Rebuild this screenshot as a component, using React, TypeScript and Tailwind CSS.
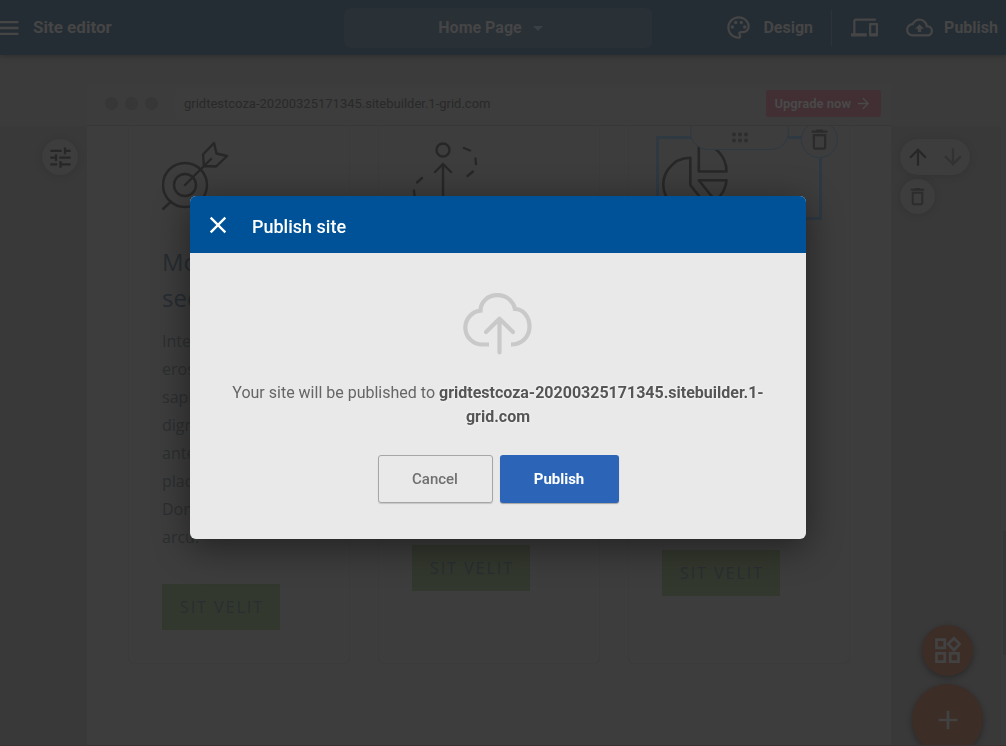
import type { ReactNode } from "react";
import {
  MdAdd,
  MdArrowDownward,
  MdArrowDropDown,
  MdArrowForward,
  MdArrowUpward,
  MdClose,
  MdDeleteOutline,
  MdMenu,
  MdOutlineBackup,
  MdOutlineDevices,
  MdOutlinePalette,
  MdOutlineWidgets,
  MdTune,
} from "react-icons/md";

const SITE = "gridtestcoza-20200325171345.sitebuilder.1-grid.com";

function TargetIcon() {
  return (
    <svg width="68" height="68" viewBox="0 0 68 68" fill="none" stroke="#272727" strokeWidth="2.4" strokeLinecap="round" strokeLinejoin="round" aria-hidden="true">
      <circle cx="23" cy="43" r="22" />
      <circle cx="23" cy="43" r="11" />
      <path d="M23 43 49 17M9 59.500 1 67M42 24 41 12.500 52 1 54.500 11.500 65 14 54 24.500Z" />
    </svg>
  );
}

function StrategyIcon() {
  return (
    <svg width="68" height="68" viewBox="0 0 68 68" fill="none" stroke="#272727" strokeWidth="2.4" strokeLinecap="round" strokeLinejoin="round" aria-hidden="true">
      <circle cx="31" cy="8" r="6.500" />
      <path d="M31 67V22M23 30 31 22 39 30" />
      <path d="M52 6 58 8.500M63.500 16.500 64 22M61 29.500 55.500 34M10 36 5 40.500M2 48.500 2.500 54M6 61 11 65" />
    </svg>
  );
}

function PieIcon() {
  return (
    <svg width="68" height="68" viewBox="0 0 68 68" fill="none" stroke="#272727" strokeWidth="2.6" strokeLinejoin="round" aria-hidden="true">
      <path d="M28.300 15.700A27 27 0 1 0 45 64L28.300 43Z" />
      <path d="M36.800 1V29.500H64.500A28.500 28.500 0 0 0 36.800 1Z" />
      <path d="M36.800 38.300H64.500Q63.500 50 53.500 59Z" />
    </svg>
  );
}

function CloudUploadIcon() {
  return (
    <svg width="70" height="62" viewBox="0 0 70 62" fill="none" stroke="#c9c9c9" strokeWidth="4.200" aria-hidden="true">
      <path d="M26 51.500H19.500A17 17 0 0 1 17.500 17.600C17.500 9 24.500 2.200 34.500 2.200S50.500 9 52 16C59.500 16 66.500 23 66.500 33.500S58.500 51.500 48 51.500" />
      <path d="M36.500 59.500V26M23 39 36.500 25.800 50 39" strokeLinecap="round" strokeLinejoin="round" />
    </svg>
  );
}

function DragDots() {
  return (
    <svg width="16" height="11" viewBox="0 0 16 11" fill="#2e2e2e" aria-hidden="true">
      {[2, 8, 14].map((x) => (
        <g key={x}>
          <circle cx={x} cy="2.500" r="2" />
          <circle cx={x} cy="8.500" r="2" />
        </g>
      ))}
    </svg>
  );
}

function Header() {
  return (
    <header className="relative z-10 flex h-[55px] shrink-0 items-center justify-between bg-[#252d34] pr-2 text-[#454545] shadow-[0_1px_6px_rgba(0,0,0,0.25)]">
      <div className="flex w-[344px] items-center gap-[11px]">
        <button type="button" aria-label="Menu" className="-ml-[6px]">
          <MdMenu size={28} />
        </button>
        <h1 className="text-[17px] font-bold">Site editor</h1>
      </div>
      <button type="button" className="flex h-10 max-w-[308px] flex-1 items-center justify-center gap-1 rounded-md bg-[#293036] pr-2 text-base font-bold">
        Home Page
        <MdArrowDropDown size={24} color="#3b4044" />
      </button>
      <div className="flex w-[346px] items-center justify-end text-base font-bold">
        <button type="button" className="flex items-center gap-[11px] pr-[18px]">
          <MdOutlinePalette size={27} />
          Design
        </button>
        <span className="mr-[19px] h-9 w-px bg-[#2c333a]" />
        <button type="button" aria-label="Preview devices" className="mr-[28px]">
          <MdOutlineDevices size={27} />
        </button>
        <button type="button" className="flex items-center gap-[11px]">
          <MdOutlineBackup size={27} />
          Publish
        </button>
      </div>
    </header>
  );
}

function AddressBar() {
  return (
    <div className="ml-[87px] mr-[115px] mt-[29px] flex h-[42px] shrink-0 items-center border-b border-[#373737] bg-[#3c3c3c] pb-[2px] pl-[18px] pr-[10px]">
      <div className="flex gap-[7px]">
        <span className="size-[13px] rounded-full bg-[#373737]" />
        <span className="size-[13px] rounded-full bg-[#373737]" />
        <span className="size-[13px] rounded-full bg-[#373737]" />
      </div>
      <div className="ml-[17px] flex h-8 flex-1 items-center rounded bg-[#3d3d3d] pl-[9px] text-[13px] text-[#292929]">{SITE}</div>
      <button type="button" className="flex h-[27px] items-center gap-1 rounded-[3px] bg-[#412f33] pl-2 pr-[9px] text-[13px] font-bold text-[#494949]">
        Upgrade now
        <MdArrowForward size={17} />
      </button>
    </div>
  );
}

type CardProps = {
  icon: ReactNode;
  bodyHeight: string;
  children?: ReactNode;
  selected?: boolean;
};

function Card({ icon, bodyHeight, children, selected }: CardProps) {
  return (
    <article className="relative h-[538px] flex-1 rounded-b-md border border-t-0 border-[#3b3b3b] bg-[#3d3d3d] px-[33px] pt-4">
      <div className={bodyHeight}>
        {icon}
        {children}
      </div>
      <button type="button" className="h-[46px] w-[118px] bg-[#33382e] pl-[2px] text-base tracking-[2px] text-[#292e33]">
        SIT VELIT
      </button>
      {selected && (
        <div className="absolute left-[27px] top-[10px] h-[84px] w-[166px] border-[3px] border-[#2e3942]">
          <button type="button" aria-label="Drag section" className="absolute -top-[25px] left-[31px] flex h-9 w-[99px] items-center justify-center rounded-full border border-[#2e3942] bg-[#3d3d3d] pt-[10px]">
            <DragDots />
          </button>
          <button type="button" aria-label="Delete item" className="absolute -right-[19px] -top-[18px] flex size-[37px] items-center justify-center rounded-full border border-[#2e3942] bg-[#3d3d3d]">
            <MdDeleteOutline size={27} color="#2b2b2b" />
          </button>
        </div>
      )}
    </article>
  );
}

const HEADING = ["Morbi", "sed"];
const COPY = ["Integer", "eros", "sapien", "dignissim", "ante", "placerat", "Donec", "arcu."];

function Canvas() {
  return (
    <main className="flex min-h-0 flex-1 overflow-hidden bg-[#393939]">
      <aside className="flex w-[87px] shrink-0 justify-end pr-[9px] pt-[13px]">
        <button type="button" aria-label="Section settings" className="flex size-9 items-center justify-center rounded-full bg-[#3d3d3d] text-[#272727] shadow-[0_1px_8px_rgba(0,0,0,0.1)]">
          <MdTune size={27} />
        </button>
      </aside>
      <section className="flex min-w-0 flex-1 gap-7 overflow-hidden bg-[#3d3d3d] px-[41px] font-['Open_Sans','Noto_Sans',sans-serif]">
        <Card icon={<TargetIcon />} bodyHeight="h-[442px]">
          <h2 className="mt-[34px] text-2xl leading-9 text-[#262c31]">
            {HEADING.map((t) => (
              <span key={t} className="block">{t}</span>
            ))}
          </h2>
          <p className="mt-[11px] text-base leading-7 text-[#2c2f31]">
            {COPY.map((l) => (
              <span key={l} className="block">{l}</span>
            ))}
          </p>
        </Card>
        <Card icon={<StrategyIcon />} bodyHeight="h-[403px]" />
        <Card icon={<PieIcon />} bodyHeight="h-[408px]" selected />
      </section>
      <aside className="flex w-[115px] shrink-0 flex-col items-start gap-1 border-r-[5px] border-[#3b3b3b] pl-[9px] pt-[13px]">
        <div className="flex h-9 items-center rounded-full bg-[#3d3d3d] shadow-[0_1px_8px_rgba(0,0,0,0.1)]">
          <button type="button" aria-label="Move up" className="flex h-9 w-[35px] items-center justify-center text-[#272727]">
            <MdArrowUpward size={26} />
          </button>
          <button type="button" aria-label="Move down" className="flex h-9 w-[35px] items-center justify-center text-[#323232]">
            <MdArrowDownward size={26} />
          </button>
        </div>
        <button type="button" aria-label="Delete section" className="flex size-[35px] items-center justify-center rounded-full bg-[#3d3d3d] text-[#2c2c2c] shadow-[0_1px_8px_rgba(0,0,0,0.1)]">
          <MdDeleteOutline size={23} />
        </button>
      </aside>
    </main>
  );
}

function PublishDialog() {
  return (
    <div className="fixed inset-0 z-20 flex items-center justify-center pb-[11px] pr-[10px]">
      <div role="dialog" aria-modal="true" aria-labelledby="publish-title" className="w-[616px] overflow-hidden rounded-md bg-[#e9e9e9] shadow-[0_8px_36px_rgba(0,0,0,0.45)]">
        <div className="flex h-[57px] items-center gap-5 bg-[#005298] pl-[14px] text-white">
          <button type="button" aria-label="Close">
            <MdClose size={28} />
          </button>
          <h2 id="publish-title" className="pt-1 text-lg font-medium">Publish site</h2>
        </div>
        <div className="flex flex-col items-center px-8 pb-9 pt-10">
          <CloudUploadIcon />
          <p className="mt-[26px] text-center text-base leading-6 text-[#666]">
            Your site will be published to{" "}
            <strong className="font-bold text-[#555] [text-shadow:0_0_3px_#fff]">{SITE}</strong>
          </p>
          <div className="mt-[26px] flex gap-[7px] text-[15px]">
            <button type="button" className="h-12 w-[115px] rounded-[3px] border border-[#a6a6a6] font-medium text-[#707070] shadow-[0_1px_1px_rgba(0,0,0,0.15)]">
              Cancel
            </button>
            <button type="button" className="h-12 w-[119px] rounded-[3px] bg-[#2c65b7] font-bold text-white shadow-[0_1px_1px_rgba(0,0,0,0.3)]">
              Publish
            </button>
          </div>
        </div>
      </div>
    </div>
  );
}

export default function App() {
  return (
    <div className="relative flex h-screen flex-col overflow-hidden border-b border-[#3c2f32] bg-[#3b3b3b] font-[Roboto,sans-serif]">
      <Header />
      <AddressBar />
      <Canvas />
      <div className="absolute right-0 top-[531px] h-[124px] w-[3px] bg-[#363636]" />
      <div className="absolute -bottom-[10px] right-[23px] flex flex-col items-center gap-2 text-[#424242]">
        <button type="button" aria-label="Add widget" className="flex size-[51px] items-center justify-center rounded-full bg-[#3d2d27] shadow-[0_2px_6px_rgba(0,0,0,0.3)]">
          <MdOutlineWidgets size={33} />
        </button>
        <button type="button" aria-label="Add section" className="flex size-[71px] items-center justify-center rounded-full bg-[#3d2d27] shadow-[0_2px_6px_rgba(0,0,0,0.3)]">
          <MdAdd size={32} />
        </button>
      </div>
      <PublishDialog />
    </div>
  );
}
